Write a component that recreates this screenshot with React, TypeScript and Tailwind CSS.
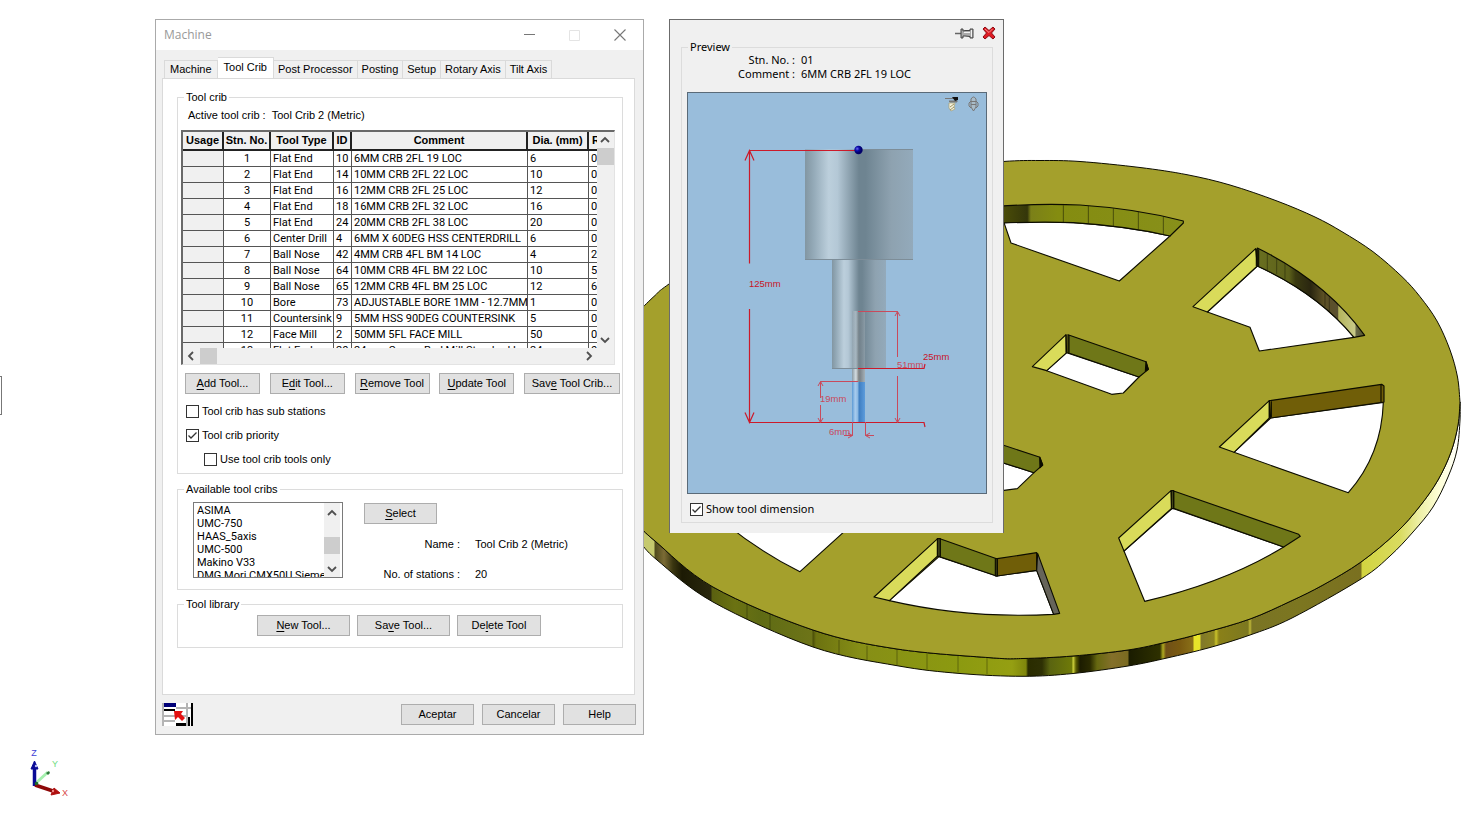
import type { ReactNode } from 'react'

const tools = [
  ['1', 'Flat End', '10', '6MM CRB 2FL 19 LOC', '6', '0'],
  ['2', 'Flat End', '14', '10MM CRB 2FL 22 LOC', '10', '0'],
  ['3', 'Flat End', '16', '12MM CRB 2FL 25 LOC', '12', '0'],
  ['4', 'Flat End', '18', '16MM CRB 2FL 32 LOC', '16', '0'],
  ['5', 'Flat End', '24', '20MM CRB 2FL 38 LOC', '20', '0'],
  ['6', 'Center Drill', '4', '6MM X 60DEG HSS CENTERDRILL', '6', '0'],
  ['7', 'Ball Nose', '42', '4MM CRB 4FL BM 14 LOC', '4', '2'],
  ['8', 'Ball Nose', '64', '10MM CRB 4FL BM 22 LOC', '10', '5'],
  ['9', 'Ball Nose', '65', '12MM CRB 4FL BM 25 LOC', '12', '6'],
  ['10', 'Bore', '73', 'ADJUSTABLE BORE 1MM - 12.7MM', '1', '0'],
  ['11', 'Countersink', '9', '5MM HSS 90DEG COUNTERSINK', '5', '0'],
  ['12', 'Face Mill', '2', '50MM 5FL FACE MILL', '50', '0'],
  ['13', 'Flat End', '20', '24mm Corner Rad Mill Standard L', '24', '0'],
]

const headers = ['Usage', 'Stn. No.', 'Tool Type', 'ID', 'Comment', 'Dia. (mm)', 'R']
const tabs = ['Machine', 'Tool Crib', 'Post Processor', 'Posting', 'Setup', 'Rotary Axis', 'Tilt Axis']
const cribs = ['ASIMA', 'UMC-750', 'HAAS_5axis', 'UMC-500', 'Makino V33', 'DMG Mori CMX50U Siemens']

type Pt = [number, number]

/* Smooth curve through a list of points (Catmull-Rom converted to Béziers). */
function curve(pts: Pt[]): string {
  return pts
    .slice(1)
    .map((p, i) => {
      const a = pts[Math.max(i - 1, 0)]
      const b = pts[i]
      const n = pts[Math.min(i + 2, pts.length - 1)]
      return `C${b[0] + (p[0] - a[0]) / 6} ${b[1] + (p[1] - a[1]) / 6} ${p[0] - (n[0] - b[0]) / 6} ${p[1] - (n[1] - b[1]) / 6} ${p[0]} ${p[1]}`
    })
    .join('')
}

const rimTop: Pt[] = [
  [640, 310], [655, 295.5], [669, 284], [740, 235], [840, 190], [930, 168], [1003, 161.5], [1040, 160.5],
  [1080, 161.5], [1140, 167.5], [1187, 174.7], [1230, 185], [1277, 201], [1315, 217], [1342, 231.7],
  [1373, 251.7], [1402, 276.7], [1420, 296.7], [1437, 321], [1450, 350], [1457.5, 377], [1460, 402],
]
const rimFront: Pt[] = [
  [1460, 402], [1458, 425], [1451, 452], [1438, 480], [1420, 506], [1396, 533], [1361, 562], [1323, 585],
  [1291, 601], [1250, 619], [1203, 633], [1167, 642], [1128, 650], [1073, 656], [1023, 658.5], [990, 657.7],
  [897, 649], [813, 630], [713, 587], [655, 541], [640, 527],
]
const rimBase: Pt[] = [
  [640, 542], [657, 560], [713, 602], [813, 647], [897, 665.7], [960, 673.5], [1023, 676.3], [1073, 673.5],
  [1128, 666], [1167, 658], [1210, 647.5], [1250, 635], [1292, 618], [1361, 579], [1390, 556], [1413, 532],
  [1433, 507], [1448, 477], [1457, 450], [1460, 420], [1460, 402],
]

const rimStops: [number, string][] = [
  [640, '#c5c96e'], [654, '#c5c96e'], [655, '#4f4a1c'], [664, '#7b6b35'], [673, '#3a3610'], [682, '#1c1a04'],
  [711, '#2a280e'], [712, '#5a6010'], [735, '#6b7212'], [760, '#5f6b14'], [812, '#6d7418'], [813, '#4b4e08'],
  [816, '#6c7210'], [860, '#868e16'], [960, '#8c9a10'], [1012, '#959f12'], [1026, '#7f860c'], [1028, '#2a2c00'],
  [1042, '#2e3004'], [1050, '#5a6410'], [1072, '#6f7a08'], [1073, '#d5d840'], [1076, '#5a5c00'], [1080, '#1c1c00'],
  [1090, '#2a2a00'], [1097, '#666810'], [1112, '#84702a'], [1128, '#7a6a20'], [1129, '#1a1c00'], [1160, '#2e3000'],
  [1163, '#b0aa20'], [1166, '#705018'], [1180, '#7a5a10'], [1193, '#8a7018'], [1194, '#e8e52a'], [1200, '#e8e52a'],
  [1201, '#80782a'], [1214, '#8c8420'], [1216, '#c9c22a'], [1219, '#8a8018'], [1248, '#7c7820'], [1250, '#c0b838'],
  [1252, '#7a7424'], [1300, '#7c7620'], [1361, '#7a7020'], [1362, '#d2d440'], [1400, '#d9db60'], [1420, '#eef0a8'],
  [1440, '#ffffd8'], [1460, '#ffffff'],
]

const YELLOW = '#d9db5a'
const GREEN = '#6f7718'
const BROWN = '#705e08'

function Wheel() {
  const top = `M640 310${curve(rimTop)}${curve(rimFront)}`
  const x = (v: number) => (v - 640) / 820
  return (
    <svg className="absolute left-0 top-0" width="1474" height="827" viewBox="0 0 1474 827" aria-hidden="true">
      <defs>
        <linearGradient id="rim" gradientUnits="userSpaceOnUse" x1="640" x2="1460" y1="0" y2="0">
          {rimStops.map(([v, c]) => (
            <stop key={v} offset={x(v)} stopColor={c} />
          ))}
        </linearGradient>
        <linearGradient id="wallA" gradientUnits="userSpaceOnUse" x1="42" x2="580" y1="0" y2="0">
          <stop offset="0" stopColor="#4a4c08" />
          <stop offset="0.13" stopColor="#34360a" />
          <stop offset="0.15" stopColor="#7b8018" />
          <stop offset="0.3" stopColor="#848c10" />
          <stop offset="1" stopColor="#88901a" />
        </linearGradient>
        <linearGradient id="wallB" gradientUnits="userSpaceOnUse" x1="800" x2="1124" y1="0" y2="0">
          <stop offset="0" stopColor="#6a7020" />
          <stop offset="0.3" stopColor="#5c601a" />
          <stop offset="0.36" stopColor="#3a3a10" />
          <stop offset="0.5" stopColor="#2a2610" />
          <stop offset="0.62" stopColor="#5c5024" />
          <stop offset="0.75" stopColor="#5a5030" />
          <stop offset="0.76" stopColor="#b4b45c" />
          <stop offset="0.91" stopColor="#c8ca88" />
          <stop offset="0.92" stopColor="#6a6a48" />
          <stop offset="1" stopColor="#55552a" />
        </linearGradient>
      </defs>
      <g stroke="#0c0c00" strokeWidth="1" strokeLinejoin="round">
        <path d={`M1460 402${curve(rimFront)}L640 542${curve(rimBase)}Z`} fill="url(#rim)" />
        <path d={top} fill="#a4a02c" />
        <path d="M839 640V655M867 646V661M897 650V665M927 654V669M958 656V672M987 658V674M747 604V619M770 614V629" strokeWidth=".5" opacity=".7" />
      </g>
      <g transform="translate(990 140) scale(.33333)" stroke="#0c0c00" strokeWidth="3.4" strokeLinejoin="round">
        <path d="M42 248Q150 244 250 248Q410 258 540 288L388 423L63 309Z" fill="#fff" />
        <path d="M20 199Q150 190 270 195Q440 206 580 243V249L540 288Q410 258 250 248Q150 244 20 250Z" fill="url(#wallA)" />
        <path d="M220 196V246M295 198V250M370 205V258M445 216V268M520 230V282" strokeWidth="1.5" />
        <path d="M802 378Q985 462 1092 592L808 633L780 562L652 516Z" fill="#fff" />
        <path d="M797 326L609 500L652 516L802 378Z" fill={YELLOW} />
        <path d="M802 324Q1008 425 1124 586L1092 592Q985 462 802 378Z" fill="url(#wallB)" />
        <path d="M799 326V378M806 328V378" />
        <path d="M832 342V390M860 357V402M885 370V418M1005 460V500M1018 472V514" strokeWidth="1.2" />
        <path d="M230 638L447 711L400 759L365 763L170 692Z" fill="#fff" />
        <path d="M228 584L127 680L170 692L230 638Z" fill={YELLOW} />
        <path d="M234 584L468 665L475 688L447 711L234 638Z" fill={GREEN} />
        <path d="M468 665L475 688L466 694Z" fill="#0c0c00" />
        <path d="M228 584V638M237 586V638" />
      </g>
      <g transform="translate(990 400) scale(.33333)" stroke="#0c0c00" strokeWidth="3.4" strokeLinejoin="round">
        <path d="M842 54L1180 7Q1175 165 1075 278L732 157Z" fill="#fff" />
        <path d="M838 2L688 141L732 157L838 54Z" fill={YELLOW} />
        <path d="M838 2L1175 -47L1182 -42L1182 6L842 54Z" fill={BROWN} />
        <path d="M838 2V54M844 4V52M1173 -45V6" />
        <path d="M547 325L881 441Q707 547 464 604L402 453Z" fill="#fff" />
        <path d="M543 272L386 414L402 453L545 325Z" fill={YELLOW} />
        <path d="M551 273L926 403L931 409L881 441L551 325Z" fill={GREEN} />
        <path d="M544 272H551V326H544Z" fill="#44461a" />
        <path d="M0 176L132 218L82 266L42 271H0Z" fill="#fff" />
        <path d="M0 122L150 172L158 195L132 218L0 176Z" fill={GREEN} />
        <path d="M149 172L158 195L150 203Z" fill="#0c0c00" />
      </g>
      <g transform="translate(640 500) scale(.33333)" stroke="#0c0c00" strokeWidth="3.4" strokeLinejoin="round">
        <path d="M897 170L1070 228L1190 211L1241 343Q985 357 748 302Z" fill="#fff" />
        <path d="M893 116L702 291L748 302L893 168Z" fill={YELLOW} />
        <path d="M900 116L1070 176V228L900 170Z" fill={GREEN} />
        <path d="M1072 176L1190 158V211L1072 228Z" fill={BROWN} />
        <path d="M1193 160L1259 340L1241 343L1190 211Z" fill="#66645a" />
        <path d="M892 116H901V169H892ZM1066 176H1072V228H1066Z" fill="#3c3e18" />
        <path d="M255 70Q370 162 480 215L640 70Z" fill="#fff" />
      </g>
    </svg>
  )
}

function AxisTriad() {
  return (
    <svg className="absolute left-6 top-[744px]" width="50" height="60" viewBox="24 744 50 60" role="img" aria-label="View orientation">
      <path d="M36 783L48 772" stroke="#a5f0ae" strokeWidth="3" />
      <path d="M46 773L49 771L50 773L48 775Z" fill="#2e7a3a" />
      <path d="M34.500 786V768" stroke="#0a0a96" strokeWidth="3.5" />
      <path d="M34.500 761L31 769H38Z" fill="#0a0a96" stroke="#0a0a96" />
      <circle cx="36" cy="766" r="1.200" fill="#b9bdf2" />
      <path d="M35 785L53 791" stroke="#8e0808" strokeWidth="3.500" />
      <path d="M60 793L51 795L54 788Z" fill="#b01010" stroke="#b01010" />
      <circle cx="53" cy="791" r="1.200" fill="#e88" />
      <circle cx="36.500" cy="783.500" r="1.800" fill="#1c6a2c" />
      <g fontFamily="Liberation Sans, sans-serif" fontSize="9" textAnchor="middle">
        <text x="34" y="756" fill="#3f3fd6">Z</text>
        <text x="55" y="767" fill="#6fdc80">Y</text>
        <text x="65" y="796" fill="#d84848">X</text>
      </g>
    </svg>
  )
}

/* Underlines the accelerator letter at index `at`. */
function Accel({ text, at }: { text: string; at: number }) {
  return (
    <>
      {text.slice(0, at)}
      <span className="underline underline-offset-2">{text[at]}</span>
      {text.slice(at + 1)}
    </>
  )
}

function Btn({ className, children }: { className: string; children: ReactNode }) {
  return (
    <button type="button" className={`h-[21px] border border-[#adadad] bg-[#e1e1e1] text-center whitespace-nowrap ${className}`}>
      {children}
    </button>
  )
}

function Check({ label, checked = false, className = '' }: { label: string; checked?: boolean; className?: string }) {
  return (
    <label className={`flex h-4 items-center gap-[3px] ${className}`}>
      <span className="grid">
        <input
          type="checkbox"
          defaultChecked={checked}
          className="peer col-start-1 row-start-1 size-[13px] appearance-none border border-[#333] bg-white"
        />
        <svg
          className="pointer-events-none invisible col-start-1 row-start-1 size-[13px] peer-checked:visible"
          viewBox="0 0 13 13"
          fill="none"
          stroke="#333"
          strokeWidth="1.3"
          aria-hidden="true"
        >
          <path d="M2.500 6.500L5 9L10.500 3.500" />
        </svg>
      </span>
      {label}
    </label>
  )
}

function Chevron({ d, label, className = '' }: { d: string; label: string; className?: string }) {
  return (
    <button type="button" aria-label={label} className={`grid size-4 shrink-0 place-items-center ${className}`}>
      <svg width="10" height="10" viewBox="0 0 10 10" fill="none" stroke="#505050" strokeWidth="1.800" aria-hidden="true">
        <path d={d} />
      </svg>
    </button>
  )
}

const UP = 'M1 7L5 3L9 7'
const DOWN = 'M1 3L5 7L9 3'
const LEFT = 'M7 1L3 5L7 9'
const RIGHT = 'M3 1L7 5L3 9'

function ToolTable() {
  return (
    <div className="mt-[7px] ml-[3px] mr-[7px] border-t-2 border-l-2 border-r border-b border-t-[#696969] border-l-[#696969] border-r-[#e3e3e3] border-b-[#e3e3e3] bg-[#f0f0f0]">
      <div className="flex h-[216px]">
        <div className="min-w-0 grow overflow-hidden bg-white">
          <table className="w-[440px] table-fixed border-separate border-spacing-0">
            <colgroup>
              <col className="w-[41px]" />
              <col className="w-[47px]" />
              <col className="w-[63px]" />
              <col className="w-[18px]" />
              <col className="w-[176px]" />
              <col className="w-[61px]" />
              <col className="w-[34px]" />
            </colgroup>
            <thead>
              <tr>
                {headers.map((h) => (
                  <th
                    key={h}
                    scope="col"
                    className="h-[19px] border-r-2 border-b-2 border-[#222] bg-[#f0f0f0] p-0 pb-[2px] text-center leading-[14px] font-bold whitespace-nowrap last:pl-[3px] last:text-left"
                  >
                    {h}
                  </th>
                ))}
              </tr>
            </thead>
            <tbody className="font-[Roboto,'Liberation_Sans',sans-serif]">
              {tools.map((row) => (
                <tr key={row[0]}>
                  <td className="h-4 border-r border-b border-[#555] bg-[#f0f0f0] p-0" />
                  {row.map((cell, i) => (
                    <td
                      key={i}
                      className="h-4 overflow-hidden border-r border-b border-[#555] p-0 pl-[2px] leading-[15px] whitespace-nowrap nth-[2]:pl-0 nth-[2]:text-center"
                    >
                      {cell}
                    </td>
                  ))}
                </tr>
              ))}
            </tbody>
          </table>
        </div>
        <div className="flex w-[17px] shrink-0 flex-col">
          <Chevron d={UP} label="Scroll up" />
          <span className="h-[17px] bg-[#cdcdcd]" />
          <Chevron d={DOWN} label="Scroll down" className="mt-auto" />
        </div>
      </div>
      <div className="flex h-4">
        <Chevron d={LEFT} label="Scroll left" />
        <span className="ml-px w-[17px] bg-[#cdcdcd]" />
        <Chevron d={RIGHT} label="Scroll right" className="mr-[17px] ml-auto" />
      </div>
    </div>
  )
}

const groupBox = 'min-w-0 border border-[#dcdcdc]'
const legendText = 'ml-[6px] px-[2px] leading-[14px]'

function MachineDialog() {
  return (
    <section
      aria-label="Machine"
      className="absolute left-[155px] top-[19px] w-[489px] border border-[#aaa] bg-[#f0f0f0] font-['Liberation_Sans',Arial,sans-serif] text-[11px] text-black"
    >
      <header className="flex h-[30px] items-center bg-white pr-[11px] pl-2 text-[#999]">
        <h1 className="grow font-['Open_Sans',sans-serif] text-xs">Machine</h1>
        <button type="button" aria-label="Minimize" className="grid w-[45px] place-items-center">
          <svg width="11" height="11" viewBox="0 0 11 11" stroke="#777" aria-hidden="true"><path d="M0 4.500H11" /></svg>
        </button>
        <button type="button" aria-label="Maximize" disabled className="grid w-[45px] place-items-center">
          <svg width="11" height="11" viewBox="0 0 11 11" fill="none" stroke="#e4e4e4" aria-hidden="true"><path d="M.5 .5H10.500V10.500H.5Z" /></svg>
        </button>
        <button type="button" aria-label="Close" className="ml-[11px] grid w-6 place-items-center">
          <svg width="12" height="12" viewBox="0 0 12 12" stroke="#777" strokeWidth="1.100" aria-hidden="true"><path d="M.5 .5L11.500 11.500M11.500 .5L.5 11.500" /></svg>
        </button>
      </header>

      <div role="tablist" className="flex items-end pt-[7px] pl-2">
        {tabs.map((t) => (
          <button
            key={t}
            type="button"
            role="tab"
            aria-selected={t === 'Tool Crib'}
            className="h-[18px] border border-b-0 border-l-0 border-[#dadada] px-1 whitespace-nowrap first:border-l first:px-[5px] aria-selected:h-[21px] aria-selected:bg-white aria-selected:px-[6px] aria-selected:pb-[2px]"
          >
            {t}
          </button>
        ))}
      </div>

      <div role="tabpanel" aria-label="Tool Crib" className="mr-2 ml-[6px] border border-[#dadada] bg-white pt-[11px] pr-[11px] pb-[46px] pl-[14px]">
        <fieldset className={`${groupBox} pb-[5px]`}>
          <legend className={legendText}>Tool crib</legend>
          <p className="mt-[3px] flex gap-[6px] pl-[10px] leading-4">
            <span>Active tool crib :</span>
            <span>Tool Crib 2 (Metric)</span>
          </p>
          <ToolTable />
          <div className="mt-2 mr-[2px] ml-[7px] flex justify-between">
            <Btn className="w-[75px]"><Accel text="Add Tool..." at={0} /></Btn>
            <Btn className="w-[75px]"><Accel text="Edit Tool..." at={1} /></Btn>
            <Btn className="w-[75px]"><Accel text="Remove Tool" at={0} /></Btn>
            <Btn className="w-[75px]"><Accel text="Update Tool" at={0} /></Btn>
            <Btn className="w-24"><Accel text="Save Tool Crib..." at={3} /></Btn>
          </div>
          <div className="mt-[9px] flex flex-col gap-2 pb-px pl-2">
            <Check label="Tool crib has sub stations" />
            <Check label="Tool crib priority" checked />
            <Check label="Use tool crib tools only" className="ml-[18px]" />
          </div>
        </fieldset>

        <fieldset className={`${groupBox} mt-2 pb-[7px]`}>
          <legend className={legendText}>Available tool cribs</legend>
          <div className="mt-[6px] flex gap-[21px] pl-[15px]">
            <div className="flex h-[76px] w-[150px] border border-[#7a7a7a] pr-[2px]">
              <ul role="listbox" aria-label="Available tool cribs" className="min-w-0 grow overflow-hidden pt-px pl-[3px] font-[Roboto,'Liberation_Sans',sans-serif] leading-[13px]">
                {cribs.map((c) => (
                  <li key={c} role="option" aria-selected="false" className="overflow-hidden whitespace-nowrap">{c}</li>
                ))}
              </ul>
              <div className="flex w-4 shrink-0 flex-col bg-[#f0f0f0]">
                <Chevron d={UP} label="Scroll up" className="mt-[2px]" />
                <span className="mt-4 h-[17px] bg-[#cdcdcd]" />
                <Chevron d={DOWN} label="Scroll down" className="mt-auto" />
              </div>
            </div>
            <div className="pt-px">
              <Btn className="w-[73px]"><Accel text="Select" at={0} /></Btn>
              <dl className="mt-3 grid grid-cols-[96px_auto] gap-x-[15px] gap-y-[14px] leading-4">
                <dt className="text-right">Name :</dt>
                <dd>Tool Crib 2 (Metric)</dd>
                <dt className="text-right whitespace-nowrap">No. of stations :</dt>
                <dd>20</dd>
              </dl>
            </div>
          </div>
        </fieldset>

        <fieldset className={`${groupBox} mt-[7px] pb-[11px]`}>
          <legend className={legendText}>Tool library</legend>
          <div className="mt-1 flex justify-center gap-[7px] pr-[2px]">
            <Btn className="w-[93px]"><Accel text="New Tool..." at={0} /></Btn>
            <Btn className="w-[93px]"><Accel text="Save Tool..." at={2} /></Btn>
            <Btn className="w-[84px]"><Accel text="Delete Tool" at={2} /></Btn>
          </div>
        </fieldset>
      </div>

      <footer className="flex items-center gap-2 py-[8px] pr-[7px] pl-[6px]">
        <svg className="mr-auto" width="31" height="23" viewBox="0 0 31 23" aria-hidden="true">
          <path d="M0 0H31V23H0Z" fill="#fff" />
          <path d="M0 0H2V23H0ZM14 4H31V6H14ZM24 0H26V23H24ZM2 12H13V14H2ZM2 17H13V19H2ZM18 12H26V14H18Z" fill="#b4b4b4" />
          <path d="M2 0H14V4H2Z" fill="#000078" />
          <path d="M2 6H13V8H2ZM14 20H24V23H14ZM26 14H28V23H26ZM29 0H31V23H29Z" fill="#000" />
          <path d="M12 8H21L19 11L23 15L20 18L16 14L13 17Z" fill="#e41010" />
        </svg>
        <Btn className="w-[73px]">Aceptar</Btn>
        <Btn className="w-[73px]">Cancelar</Btn>
        <Btn className="w-[73px]">Help</Btn>
      </footer>
    </section>
  )
}

function ToolDrawing() {
  return (
    <svg className="block w-full" viewBox="688 93 298 400" role="img" aria-label="Tool assembly with dimensions">
      <defs>
        <linearGradient id="holder">
          <stop offset="0" stopColor="#8296a2" />
          <stop offset="0.08" stopColor="#94aab8" />
          <stop offset="0.22" stopColor="#bccfdc" />
          <stop offset="0.3" stopColor="#b4c8d6" />
          <stop offset="0.5" stopColor="#6e8491" />
          <stop offset="0.56" stopColor="#6e8491" />
          <stop offset="0.8" stopColor="#8ea2b0" />
          <stop offset="1" stopColor="#93aabb" />
        </linearGradient>
        <linearGradient id="flute">
          <stop offset="0" stopColor="#5c9ad4" />
          <stop offset="0.25" stopColor="#a8ccee" />
          <stop offset="0.48" stopColor="#84b4e0" />
          <stop offset="0.52" stopColor="#3c7cc0" />
          <stop offset="1" stopColor="#5c9cdc" />
        </linearGradient>
        <linearGradient id="shank">
          <stop offset="0" stopColor="#8a9aa4" />
          <stop offset="0.3" stopColor="#d4dde2" />
          <stop offset="0.5" stopColor="#8a8c8c" />
          <stop offset="0.6" stopColor="#7a8288" />
          <stop offset="1" stopColor="#a4b0b8" />
        </linearGradient>
        <radialGradient id="ball" cx=".35" cy=".35">
          <stop offset="0" stopColor="#6a6af0" />
          <stop offset="0.5" stopColor="#0a0aa8" />
          <stop offset="1" stopColor="#00006a" />
        </radialGradient>
      </defs>
      <path d="M688 93H987V493H688Z" fill="#99bddb" />
      <path d="M805 149.500H913V259.500H805Z" fill="url(#holder)" />
      <path d="M858 149.500H913M805 259.500H913" stroke="#7d8d98" />
      <path d="M832 260H886V368.500H832Z" fill="url(#holder)" />
      <path d="M832 368.500H886" stroke="#7d8d98" />
      <path d="M852 311H865V368H852Z" fill="url(#shank)" opacity=".45" />
      <path d="M852 369H865V382H852Z" fill="url(#shank)" />
      <path d="M852 382H865V422H852Z" fill="url(#flute)" />
      <g fill="none" stroke="#cc1a2a" strokeWidth="1.200">
        <path d="M858 150.500H749.500V263.500M749.500 309V422.500H858M745 160.500L749.500 150.500L754 160.500M745 412.500L749.500 422.500L754 412.500" />
        <path d="M858 422.500H924L925 427M858 368.500H924L925 364" />
      </g>
      <g fill="none" stroke="#c84a5c">
        <path d="M858 311.500H897.500V357M897.500 376V422M895 316L897.500 311.500L900 316M895 418L897.500 422.500L900 418" />
        <path d="M858 381.500H820.500V398M820.500 405V422M818 386L820.500 381.500L823 386M818 418L820.500 422.500L823 418" />
        <path d="M852.500 422V435.500H844M865.500 422V435.500H874M848 433L852.500 435.500L848 438M870 433L865.500 435.500L870 438" />
      </g>
      <circle cx="858.500" cy="150" r="4.200" fill="url(#ball)" />
      <g fontFamily="Liberation Sans, sans-serif" fontSize="9.500">
        <text x="749" y="287" fill="#c81428">125mm</text>
        <text x="923" y="360" fill="#c81428">25mm</text>
        <g fill="#c84a5c">
          <text x="897" y="368">51mm</text>
          <text x="820" y="402">19mm</text>
          <text x="829" y="435">6mm</text>
        </g>
      </g>
      <path d="M945 98.500H957M949 101H957V102H950Z" stroke="#777" fill="#777" />
      <path d="M952 97H958V100L955 101Z" fill="#111" />
      <path d="M949 103H955L954 107L955 109L951 111L949 108Z" fill="#f4f1de" stroke="#a89f70" strokeWidth=".7" />
      <path d="M950 107L954 104M950 110L954 107" stroke="#8a7f48" strokeWidth=".8" />
      <path d="M971 99Q973.500 95 976 99V107L973.500 111L971 107ZM969 103L971 101M969 103V106L971 108M978 103L976 101M978 103V106L976 108M971 101.500H976M971 104.500H976" fill="#a9bcc9" stroke="#777" />
    </svg>
  )
}

function PreviewPanel() {
  return (
    <section
      aria-label="Preview"
      className="absolute left-[669px] top-[19px] w-[335px] border border-b-0 border-[#6b6b6b] bg-[#f0f0f0] pt-[6px] pr-[10px] pb-[10px] pl-[11px] font-['Noto_Sans','Open_Sans',sans-serif] text-[11px] text-black"
    >
      <div className="-mr-[3px] flex h-[14px] justify-end gap-2">
        <button type="button" aria-label="Pin">
          <svg width="19" height="14" viewBox="0 0 19 14" aria-hidden="true">
            <path d="M0 7.500H6" stroke="#666" strokeWidth="1.500" />
            <path d="M6 3H8V5L10 4.500H15V3H18V12H15V10.500L10 10L8 10V12H6Z" fill="#aaa" stroke="#444" />
            <path d="M9 6.500H15M16.500 4V11" stroke="#f2f2f2" />
          </svg>
        </button>
        <button type="button" aria-label="Close">
          <svg width="14" height="14" viewBox="0 0 14 14" aria-hidden="true">
            <path d="M1 3L3 1L7 4.500L11 1L13 3L9.500 7L13 11L11 13L7 9.500L3 13L1 11L4.500 7Z" fill="#e01c24" stroke="#8c0c14" strokeLinejoin="round" />
            <path d="M3 3L7 6.500L10.500 3" fill="none" stroke="#f58a8a" />
          </svg>
        </button>
      </div>
      <fieldset className="min-w-0 border border-[#dcdcdc] px-[5px] pb-[5px]">
        <legend className="ml-[1px] px-[2px] leading-[14px]">Preview</legend>
        <dl className="-mt-px grid grid-cols-[108px_auto] gap-x-[6px] leading-[14px]">
          <dt className="text-right">Stn. No. :</dt>
          <dd>01</dd>
          <dt className="text-right">Comment :</dt>
          <dd>6MM CRB 2FL 19 LOC</dd>
        </dl>
        <div className="mt-[11px] border border-[#5a6a78]">
          <ToolDrawing />
        </div>
        <Check label="Show tool dimension" checked className="mt-[7px] ml-[3px]" />
      </fieldset>
    </section>
  )
}

export default function App() {
  return (
    <main className="relative min-h-screen overflow-hidden bg-white">
      <Wheel />
      <span className="absolute left-0 top-[376px] h-[39px] w-[2px] border border-l-0 border-[#777]" />
      <AxisTriad />
      <MachineDialog />
      <PreviewPanel />
    </main>
  )
}
